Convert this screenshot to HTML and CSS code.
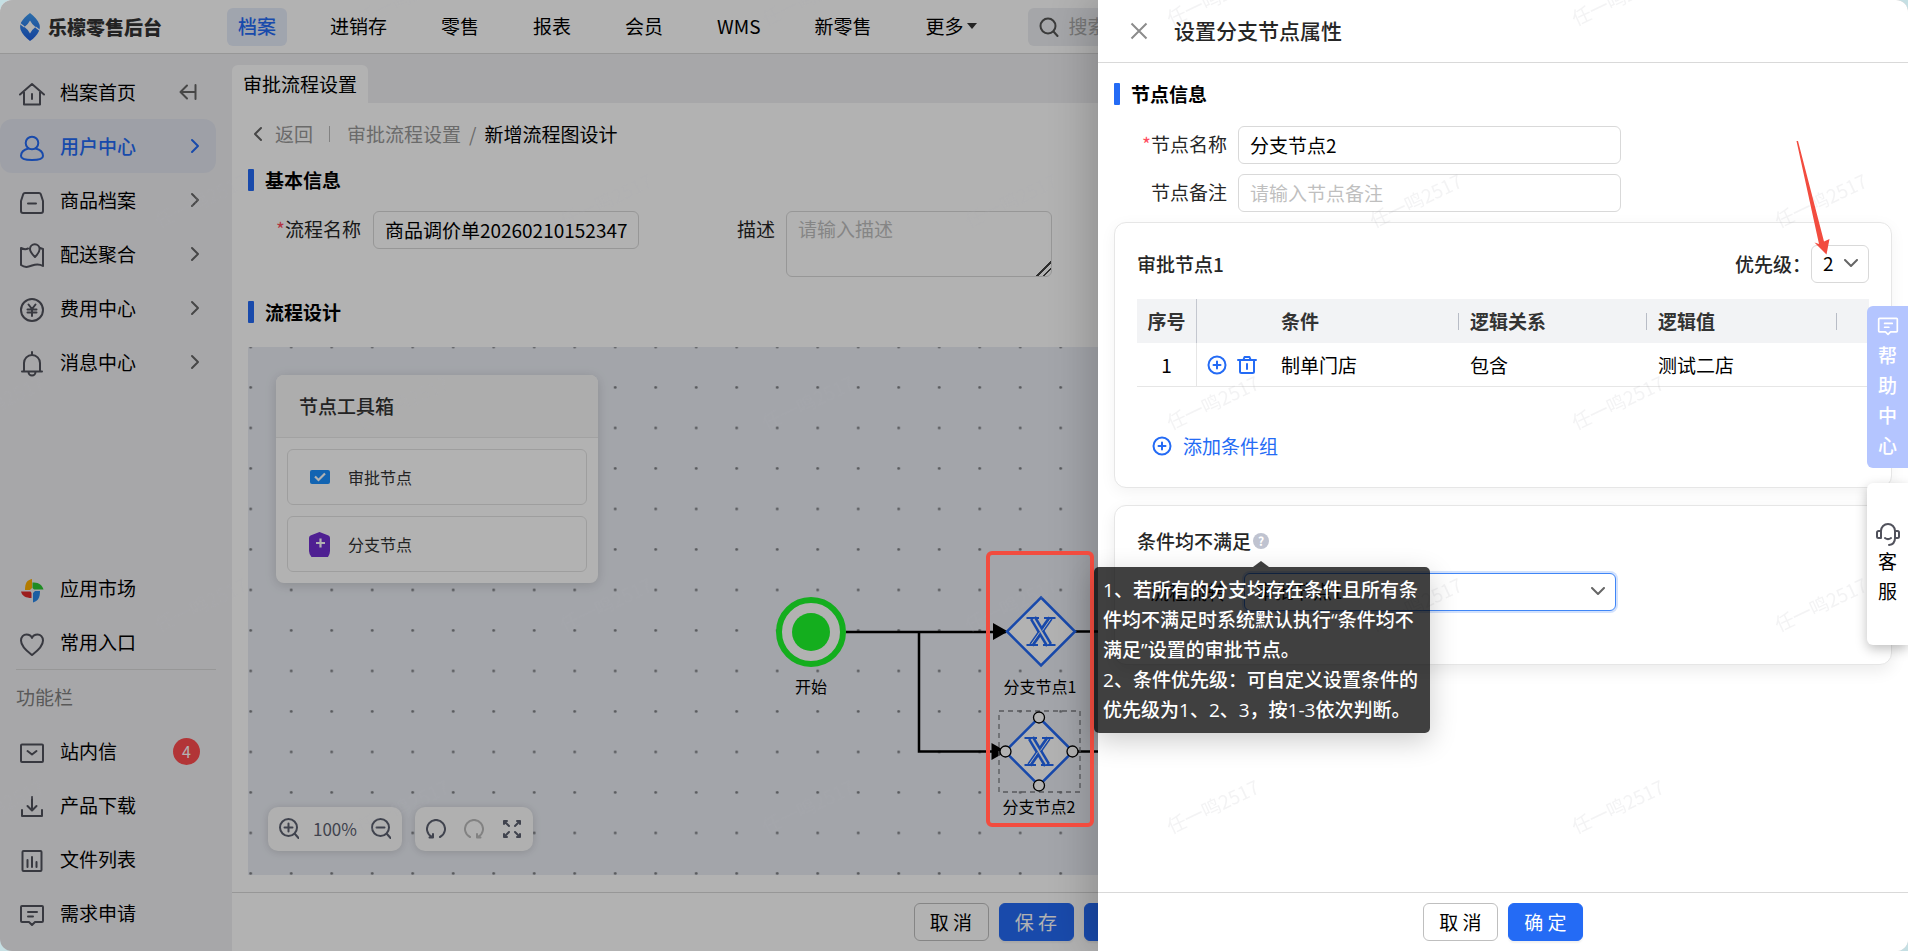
FILE: index.html
```html
<!DOCTYPE html>
<html lang="zh-CN">
<head>
<meta charset="utf-8">
<title>乐檬零售后台</title>
<link rel="stylesheet" href="styles.css">
</head>
<body>
<svg class="sprite" aria-hidden="true">
  <symbol id="i-right" viewBox="0 0 10 16"><path d="M2 2l6 6-6 6"/></symbol>
  <symbol id="i-down" viewBox="0 0 14 9"><path d="M1 1l6 6 6-6"/></symbol>
  <symbol id="i-plus" viewBox="0 0 20 20"><circle cx="10" cy="10" r="8.5"/><path d="M10 6.5v7M6.500 10h7"/></symbol>
  <symbol id="i-note" viewBox="0 0 26 26"><path d="M3 4h20a1 1 0 0 1 1 1v14a1 1 0 0 1-1 1h-7l-3 3-3-3H3a1 1 0 0 1-1-1V5a1 1 0 0 1 1-1zM9 10h9M9 14.500h5"/></symbol>
</svg>

<div class="app">
  <header class="topbar">
    <div class="brand">
      <svg class="brand-mark" width="20" height="28" viewBox="0 0 20 28">
        <defs><linearGradient id="bm" x1="0" y1="0" x2="0" y2="1"><stop offset="0" stop-color="#3f9df2"/><stop offset="1" stop-color="#1d5fe0"/></linearGradient></defs>
        <path fill="url(#bm)" fill-rule="evenodd" d="M10 0C14 3 18 7 19.500 11.500c.500 2 .500 4-.500 6.500-2 4-5 7.500-9 10C6 25 2 21 .500 16.500 0 14 0 12 1 9.500 3 6 6 3 10 0zM10 7.500Q8 11.500 4.500 14 8 16.500 10 20.500 12 16.500 15.500 14 12 11.500 10 7.500z"/>
        <path stroke="#fff" stroke-width="1.200" fill="none" d="M4.500 14L0 10.500M15.500 14l4.500 3.500"/>
      </svg>
      <span class="brand-name">乐檬零售后台</span>
    </div>
    <nav class="topnav">
      <a href="#" class="active">档案</a><a href="#">进销存</a><a href="#">零售</a><a href="#">报表</a><a href="#">会员</a><a href="#">WMS</a><a href="#">新零售</a><a href="#">更多<i class="caret"></i></a>
    </nav>
    <label class="search">
      <svg width="20" height="20" viewBox="0 0 20 20" class="line"><circle cx="9" cy="9" r="7.500"/><path d="M14.500 14.500L18.500 19"/></svg>
      <input type="text" placeholder="搜索" aria-label="搜索">
    </label>
  </header>

  <div class="body">
    <aside class="sidebar">
      <a href="#" class="item">
        <svg class="line" width="26" height="26" viewBox="0 0 26 26"><path d="M1 13.500L13 3l12 10.500M5 11v12.500h16V11M13 13v5"/></svg>
        <span>档案首页</span>
        <svg class="line dim fold" width="18" height="16" viewBox="0 0 18 16"><path d="M16.500 1v14M16 8H2M8 1.500L1.500 8 8 14.500"/></svg>
      </a>
      <a href="#" class="item active">
        <svg class="line" width="26" height="26" viewBox="0 0 26 26"><circle cx="13" cy="8" r="6.300"/><path d="M9.500 13.500C5 14.500 2 17.500 2 21c0 3 5 4 11 4s11-1 11-4c0-3.500-3-6.500-7.500-7.500"/></svg>
        <span>用户中心</span>
        <svg class="line arrow" width="10" height="16"><use href="#i-right"/></svg>
      </a>
      <a href="#" class="item">
        <svg class="line" width="26" height="26" viewBox="0 0 26 26"><path d="M6 4h14a2 2 0 0 1 1.800 1.200L24 12v10a2 2 0 0 1-2 2H4a2 2 0 0 1-2-2V12l2.200-6.800A2 2 0 0 1 6 4zM9 14.500h8"/></svg>
        <span>商品档案</span>
        <svg class="line dim arrow" width="10" height="16"><use href="#i-right"/></svg>
      </a>
      <a href="#" class="item">
        <svg class="line" width="26" height="26" viewBox="0 0 26 26"><path d="M9 5.500c-2 1-4 1-7-.500v17c4 3 7 2 11 .500s7-2 11 .500V6l-3-1"/><path d="M16 14c-3-3-5-5-5-8a4.800 4.800 0 0 1 9.600 0c0 3-1.600 5-4.600 8z"/></svg>
        <span>配送聚合</span>
        <svg class="line dim arrow" width="10" height="16"><use href="#i-right"/></svg>
      </a>
      <a href="#" class="item">
        <svg class="line" width="26" height="26" viewBox="0 0 26 26"><circle cx="13" cy="13" r="11"/><path d="M9.500 7.500l3.500 4.500 3.500-4.500M8.500 12.500h9M8.500 15.500h9M13 12v7"/></svg>
        <span>费用中心</span>
        <svg class="line dim arrow" width="10" height="16"><use href="#i-right"/></svg>
      </a>
      <a href="#" class="item">
        <svg class="line" width="26" height="26" viewBox="0 0 26 26"><path d="M13 1v3M5 20V12a8 8 0 0 1 16 0v8M3 20.500h20M9.500 21a3.500 3.500 0 0 0 7 0"/></svg>
        <span>消息中心</span>
        <svg class="line dim arrow" width="10" height="16"><use href="#i-right"/></svg>
      </a>

      <div class="spacer"></div>

      <a href="#" class="item">
        <svg width="26" height="26" viewBox="0 0 26 26"><path fill="#ffb000" d="M13 2v9l-2 2H6C6 6 8 3 13 2z"/><path fill="#2bc832" d="M13.500 5.500C20 5 23 8 24.500 12.500H15l-1.500-1.500z"/><path fill="#2a87e8" d="M21 14c0 7-2 10-7 11.500V16l2-2z"/><path fill="#e02a2a" d="M2 14.500h9.500l1 1.500v5C7 21 3 19 2 14.500z"/></svg>
        <span>应用市场</span>
      </a>
      <a href="#" class="item">
        <svg class="line" width="26" height="26" viewBox="0 0 26 26"><path d="M13 24C9 21 2 16 2 9.500 2 6 4.500 3.500 7.500 3.500c2.500 0 4.500 1 5.500 3.500 1-2.500 3-3.500 5.500-3.500 3 0 5.500 2.500 5.500 6C24 16 17 21 13 24z"/></svg>
        <span>常用入口</span>
      </a>
      <p class="group-title">功能栏</p>
      <a href="#" class="item">
        <svg class="line" width="26" height="26" viewBox="0 0 26 26"><rect x="2" y="4.500" width="22" height="17.500" rx="1"/><path d="M8.500 11l4.500 3.500 4.500-3.500"/></svg>
        <span>站内信</span><b class="badge">4</b>
      </a>
      <a href="#" class="item">
        <svg class="line" width="26" height="26" viewBox="0 0 26 26"><path d="M13 3v13M8.500 12l4.500 4.500 4.500-4.500M3 16v6h20v-6"/></svg>
        <span>产品下载</span>
      </a>
      <a href="#" class="item">
        <svg class="line" width="26" height="26" viewBox="0 0 26 26"><rect x="3.500" y="3" width="19" height="20" rx="1"/><path d="M8.500 12v7M13 9v10M17.500 14v5"/></svg>
        <span>文件列表</span>
      </a>
      <a href="#" class="item">
        <svg class="line" width="26" height="26"><use href="#i-note"/></svg>
        <span>需求申请</span>
      </a>
    </aside>

    <main class="main">
      <div class="tabs"><a href="#" class="tab">审批流程设置</a></div>
      <section class="page">
        <div class="crumbs">
          <svg class="line" width="10" height="16" viewBox="0 0 10 16"><path d="M8 2L2 8l6 6"/></svg>
          <a href="#">返回</a><i class="vbar"></i><a href="#">审批流程设置</a><span>/</span><strong>新增流程图设计</strong>
        </div>
        <h2 class="section-title">基本信息</h2>
        <div class="form">
          <label for="flow-name"><em>*</em>流程名称</label>
          <input id="flow-name" class="field" type="text" value="商品调价单20260210152347">
          <label for="flow-desc" class="second">描述</label>
          <textarea id="flow-desc" class="field" placeholder="请输入描述"></textarea>
        </div>
        <h2 class="section-title">流程设计</h2>
        <div class="canvas">
          <svg class="diagram">
            <defs>
              <pattern id="dots" width="40.500" height="40.500" patternUnits="userSpaceOnUse" x="-17.500" y="-20.200"><circle cx="20.200" cy="20.200" r="1.400" fill="#7d7f84"/></pattern>
              <g id="gateway">
                <path d="M0-34L34 0 0 34-34 0z" fill="#fff" stroke="#2369f5" stroke-width="2.500"/>
                <g fill="none" stroke="#2369f5">
                  <path stroke-width="2" d="M-14.500-13.500H-2M3-13.500h11.500M-14.500 13.500H-3M2 13.500h12.500"/>
                  <path stroke-width="5" d="M9.500-13.500L-9.500 13.500"/>
                  <path stroke-width="7" d="M-8-13.500L8 13.500"/>
                </g>
                <g fill="none" stroke="#fff">
                  <path stroke-width="1" d="M9.500-12.500L1.500-1M-1.500 1L-9.500 12.500"/>
                  <path stroke-width="1.800" d="M-7.500-12.500L7.500 12.500"/>
                </g>
              </g>
            </defs>
            <rect width="100%" height="100%" fill="url(#dots)"/>
            <g fill="none" stroke="#000" stroke-width="2.500">
              <path d="M598 285h160M671 285v119.500h86M827 284.500h60M825 404.500h60"/>
            </g>
            <path d="M745 276l15 8.500-15 8.500zM743.500 396l15 8.500-15 8.500z"/>
            <circle cx="563" cy="285" r="32" fill="#fff" stroke="#1df92c" stroke-width="6"/>
            <circle cx="563" cy="285" r="19" fill="#1df92c"/>
            <use href="#gateway" x="793" y="284.500"/>
            <use href="#gateway" x="791" y="404.500"/>
            <rect x="751" y="364" width="81" height="81" fill="none" stroke="#7d7f84" stroke-width="1.300" stroke-dasharray="5 4"/>
            <g fill="#fff" stroke="#000" stroke-width="1.300">
              <circle cx="791" cy="370.500" r="5.500"/><circle cx="757.500" cy="404.500" r="5.500"/><circle cx="824.500" cy="404.500" r="5.500"/><circle cx="791" cy="438.500" r="5.500"/>
            </g>
            <g class="node-label">
              <text x="563" y="346">开始</text><text x="792" y="346">分支节点1</text><text x="791" y="466">分支节点2</text>
            </g>
          </svg>

          <div class="toolbox">
            <h3>节点工具箱</h3>
            <div class="tools">
              <button type="button" class="tool">
                <svg width="22" height="26" viewBox="0 0 22 26"><rect x="1" y="6" width="20" height="14" rx="2" fill="#1a90ff"/><path d="M6 12.500l3.500 3.500L16 9.500" fill="none" stroke="#fff" stroke-width="2.200"/></svg>
                审批节点
              </button>
              <button type="button" class="tool">
                <svg width="22" height="26" viewBox="0 0 22 26"><path d="M10.500 1L19.500 4.500Q21 5 21 7v13q0 3-2 6H2.500Q0 23 0 20V7q0-2 1.500-2.500z" fill="#722ed1"/><path d="M11.500 7.500v9M7 12h9" stroke="#fff" stroke-width="2.200"/></svg>
                分支节点
              </button>
            </div>
          </div>

          <div class="controls">
            <div class="control zoom">
              <button type="button" aria-label="放大"><svg class="line" width="20" height="22" viewBox="0 0 20 22"><circle cx="9.500" cy="9.500" r="8.500"/><path d="M9.500 5.500v8M5.500 9.500h8M16 16l3.500 4"/></svg></button>
              <span>100%</span>
              <button type="button" aria-label="缩小"><svg class="line" width="20" height="22" viewBox="0 0 20 22"><circle cx="9.500" cy="9.500" r="8.500"/><path d="M5.500 9.500h8M16 16l3.500 4"/></svg></button>
            </div>
            <div class="control">
              <button type="button" aria-label="撤销"><svg class="line" width="20" height="20" viewBox="0 0 20 20"><path d="M14 18a9 9 0 1 0-8 0M3.500 18.500H7V15"/></svg></button>
              <button type="button" aria-label="重做" class="off"><svg class="line" width="20" height="20" viewBox="0 0 20 20"><path d="M6 18a9 9 0 1 1 8 0M16.500 18.500H13V15"/></svg></button>
              <button type="button" aria-label="全屏"><svg class="line" width="20" height="20" viewBox="0 0 20 20"><path d="M2 2l5 5M18 2l-5 5M2 18l5-5M18 18l-5-5M2 5V2h3M15 2h3v3M2 15v3h3M18 15v3h-3"/></svg></button>
            </div>
          </div>
        </div>
      </section>
      <footer class="actions">
        <button type="button" class="btn">取 消</button>
        <button type="button" class="btn primary">保 存</button>
        <button type="button" class="btn primary wide">保存并发布</button>
      </footer>
    </main>
  </div>

  <div class="mask"></div>

  <section class="drawer" role="dialog" aria-labelledby="drawer-title">
    <header class="drawer-head">
      <button type="button" class="close" aria-label="关闭"><svg width="18" height="18" viewBox="0 0 18 18"><path d="M1.500 1.500l15 15M16.500 1.500l-15 15"/></svg></button>
      <h1 id="drawer-title">设置分支节点属性</h1>
    </header>
    <div class="drawer-body">
      <h2 class="section-title">节点信息</h2>
      <div class="rows">
        <label for="node-name"><em>*</em>节点名称</label>
        <input id="node-name" class="field" type="text" value="分支节点2">
        <label for="node-note">节点备注</label>
        <input id="node-note" class="field" type="text" placeholder="请输入节点备注">
      </div>

      <div class="card conditions">
        <div class="card-head">
          <h3>审批节点1</h3>
          <label for="priority">优先级：</label>
          <div class="select small">
            <select id="priority" class="field"><option>1</option><option selected>2</option><option>3</option></select>
            <svg class="line" width="14" height="9"><use href="#i-down"/></svg>
          </div>
        </div>
        <table>
          <colgroup><col class="c-no"><col class="c-act"><col class="c-cond"><col class="c-rel"><col class="c-val"><col></colgroup>
          <thead><tr><th class="no">序号</th><th></th><th class="sep">条件</th><th class="sep">逻辑关系</th><th class="sep">逻辑值</th><th></th></tr></thead>
          <tbody><tr>
            <td class="no">1</td>
            <td class="act"><div>
              <button type="button" aria-label="添加"><svg class="line" width="20" height="20"><use href="#i-plus"/></svg></button>
              <button type="button" aria-label="删除"><svg class="line" width="20" height="20" viewBox="0 0 20 20"><path d="M1 5h18M6.500 4.500l1-2.500h5l1 2.500M3 5v11.500a1.500 1.500 0 0 0 1.500 1.500h11a1.500 1.500 0 0 0 1.500-1.500V5M10 9v5"/></svg></button>
            </div></td>
            <td>制单门店</td><td>包含</td><td>测试二店</td><td></td>
          </tr></tbody>
        </table>
        <button type="button" class="add"><svg class="line" width="20" height="20"><use href="#i-plus"/></svg>添加条件组</button>
      </div>

      <div class="card fallback">
        <div class="fallback-head">
          <h3>条件均不满足</h3>
          <span class="help">?
            <span class="tooltip" role="tooltip"><span>1、若所有的分支均存在条件且所有条</span><span>件均不满足时系统默认执行“条件均不</span><span>满足”设置的审批节点。</span><span>2、条件优先级：可自定义设置条件的</span><span>优先级为1、2、3，按1-3依次判断。</span></span>
          </span>
        </div>
        <div class="fallback-row">
          <label for="fallback-node"><em>*</em>流程流转</label>
          <div class="select focus">
            <select id="fallback-node" class="field"><option>审批节点1</option></select>
            <svg class="line" width="14" height="9"><use href="#i-down"/></svg>
          </div>
        </div>
      </div>
    </div>
    <footer class="actions">
      <button type="button" class="btn">取 消</button>
      <button type="button" class="btn primary">确 定</button>
    </footer>
  </section>

  <div class="side-tabs">
    <button type="button" class="side-tab help-tab">
      <svg class="line" width="22" height="22"><use href="#i-note"/></svg><span>帮</span><span>助</span><span>中</span><span>心</span>
    </button>
    <button type="button" class="side-tab service-tab">
      <svg class="line" width="24" height="24" viewBox="0 0 24 24"><path d="M5 8v8H2.500A1.500 1.500 0 0 1 1 14.500v-4A1.500 1.500 0 0 1 2.500 9H5a7 7 0 0 1 14 0h2.500a1.500 1.500 0 0 1 1.500 1.500v4a1.500 1.500 0 0 1-1.500 1.500H19V9M19 16c0 4-2 6.500-6 7M9 16c2 1.500 4 1.500 6 0"/></svg><span>客</span><span>服</span>
    </button>
  </div>

  <svg class="overlay" aria-hidden="true">
    <defs>
      <pattern id="wm" width="405" height="404" patternUnits="userSpaceOnUse" x="100" y="100">
        <g class="wm-text"><text transform="translate(101 101) rotate(-25)" dy="7">任一鸣2517</text><text transform="translate(303 303) rotate(-25)" dy="7">任一鸣2517</text></g>
      </pattern>
    </defs>
    <rect width="100%" height="100%" fill="url(#wm)"/>
    <rect x="988" y="553" width="104" height="272" rx="4" fill="none" stroke="#f24c3f" stroke-width="4"/>
    <path d="M1796.500 141h1.500L1824 241.500l5.500-2.500-3 15.500-12-12 4.500 1.500z" fill="#f24c3f"/>
  </svg>
</div>
</body>
</html>
```
FILE: styles.css
```css
* { box-sizing: border-box; }
body {
  margin: 0;
  background: #c5dfe3;
  font-family: "Noto Sans CJK SC", "Noto Sans", sans-serif;
  font-size: 19px;
  line-height: 28px;
  color: #000;
}
h1, h2, h3, p { margin: 0; font-weight: 500; }
a { color: inherit; text-decoration: none; }
em { color: #ff4d5e; font-style: normal; }
button, input, select, textarea { font: inherit; color: inherit; }
button { border: 0; padding: 0; background: none; display: flex; align-items: center; justify-content: center; }
svg { flex: none; display: block; }
.sprite { position: absolute; width: 0; height: 0; }
.line { fill: none; stroke: currentColor; stroke-width: 2; stroke-linejoin: round; stroke-linecap: round; }

.app {
  position: relative;
  display: flex;
  flex-direction: column;
  height: 100vh;
  overflow: hidden;
  border-radius: 12px;
  background: #f0f0f3;
}

/* top bar */
.topbar {
  display: flex;
  align-items: center;
  height: 54px;
  padding: 0 20px;
  background: #fff;
  border-bottom: 1px solid #d9d9d9;
}
.brand { display: flex; align-items: center; gap: 8px; width: 207px; }
.brand-name { font-weight: 900; color: #333; }
.topnav { display: flex; gap: 32px; }
.topnav a { display: flex; align-items: center; height: 38px; padding: 0 11px 2px; border-radius: 6px; }
.topnav .active { background: #e6ecfa; color: #246bf5; font-weight: 500; }
.caret { margin-left: 3px; border: 5px solid transparent; border-top: 6px solid #333; border-bottom: 0; }
.search {
  flex: 1;
  display: flex;
  align-items: center;
  gap: 10px;
  height: 38px;
  margin-left: 40px;
  padding-left: 11px;
  border-radius: 6px;
  background: #eceef2;
  color: #555;
}
.search input { flex: 1; border: 0; padding: 0 0 2px; background: none; }
::placeholder { color: #bfbfbf; opacity: 1; }
.search ::placeholder { color: #aaa; }

/* sidebar */
.body { flex: 1; display: flex; min-height: 0; }
.sidebar { display: flex; flex-direction: column; width: 232px; padding: 11px 16px 11px 0; }
.item { display: flex; align-items: center; height: 54px; padding: 0 16px 0 19px; border-radius: 12px; }
.item span { flex: 1; margin-left: 15px; padding-bottom: 1px; }
.item > svg:first-child { margin-top: 3px; color: #51525c; }
.item .dim { color: #666; }
.item .fold { margin-right: 3px; }
.item.active { background: #e3e6ef; }
.item.active, .item.active > svg:first-child { color: #246bf5; font-weight: 500; }
.spacer { flex: 1; }
.group-title { height: 55px; margin-left: 16px; padding-top: 13px; border-top: 1px solid #d9d9d9; color: #808080; font-weight: 400; }
.badge { width: 27px; height: 27px; border-radius: 50%; background: #ff4d4f; color: #fff; font-size: 16px; font-weight: 400; line-height: 27px; text-align: center; }

/* main page */
.main { flex: 1; display: flex; flex-direction: column; min-width: 0; }
.tabs { padding-top: 11px; }
.tab { display: inline-flex; align-items: center; height: 38px; padding: 0 11px; background: #fff; border-radius: 6px 6px 0 0; vertical-align: top; }
.page { flex: 1; display: flex; flex-direction: column; min-height: 0; padding: 17px 16px 0; background: #fff; }
.crumbs { display: flex; align-items: center; height: 28px; padding-left: 5px; color: #999; }
.crumbs svg { margin-right: 12px; color: #666; }
.crumbs span { margin: 0 8px; }
.crumbs strong { font-weight: 400; color: #000; }
.vbar { width: 1px; height: 16px; margin: 0 17px 0 16px; background: #bbb; }
.section-title { display: flex; align-items: center; gap: 11px; height: 22px; font-size: 19px; font-weight: 700; }
.section-title::before { content: ""; width: 6px; height: 22px; border-radius: 1px; background: #246bf5; }
.page .section-title { margin-top: 21px; }
.field { height: 38px; padding: 0 10px 2px 11px; border: 1px solid #d9d9d9; border-radius: 6px; background: #fff; outline: 0; }
.form { display: flex; align-items: flex-start; height: 89px; padding: 20px 0 0 28px; }
.form label { padding-top: 4px; margin-right: 12px; color: #262626; }
.form .field { width: 266px; }
.form .second { margin-left: 98px; margin-right: 11px; }
.form textarea { height: 66px; padding: 3px 11px; }
textarea::-webkit-resizer {
  background: linear-gradient(135deg, transparent 50%, #444 50%, #444 57%, transparent 57%, transparent 72%, #444 72%, #444 79%, transparent 79%);
}

.canvas { position: relative; flex: 1; margin-top: 24px; margin-bottom: 17px; background: #eaedf4; overflow: hidden; }
.diagram { position: absolute; inset: 0; width: 100%; height: 100%; }
.node-label { font-size: 16px; text-anchor: middle; }
.toolbox {
  position: absolute;
  left: 28px;
  top: 28px;
  width: 322px;
  border-radius: 8px;
  background: #fff;
  box-shadow: 0 2px 12px rgba(0, 0, 0, .15);
  overflow: hidden;
}
.toolbox h3 { height: 63px; padding: 17px 23px; border-bottom: 1px solid #e8e8e8; background: #f8f8f8; color: #333; font-size: 19px; }
.tools { display: flex; flex-direction: column; gap: 11px; padding: 11px; }
.tool { justify-content: flex-start; gap: 17px; height: 56px; padding: 0 21px; border: 1px solid #e3e3e3; border-radius: 6px; font-size: 16px; color: #333; }
.controls { position: absolute; left: 20px; bottom: 24px; display: flex; gap: 13px; }
.control { display: flex; align-items: center; gap: 18px; height: 44px; padding: 0 11px; border-radius: 10px; background: #fcfcfc; box-shadow: 0 1px 8px rgba(0, 0, 0, .15); color: #5c6170; font-size: 17px; }
.control.zoom { gap: 14px; }
.control .off { color: #bbb; }

.actions { display: flex; justify-content: center; gap: 10px; height: 59px; padding-top: 10px; border-top: 1px solid #d9d9d9; background: #fff; }
.btn { width: 75px; height: 38px; border: 1px solid #bfbfbf; border-radius: 6px; background: #fff; }
.btn.primary { border-color: #246bf5; background: #246bf5; color: #fff; box-shadow: 0 2px 2px rgba(0, 0, 0, .06); }
.btn.wide { width: 143px; }

/* drawer */
.mask { position: absolute; inset: 0; background: rgba(0, 0, 0, .3); }
.drawer {
  position: absolute;
  top: 0;
  right: 0;
  bottom: 0;
  display: flex;
  flex-direction: column;
  width: 810px;
  background: #fff;
  box-shadow: -8px 0 40px rgba(0, 0, 0, .2);
}
.drawer-head { display: flex; align-items: center; gap: 26px; height: 63px; padding-left: 32px; border-bottom: 1px solid #d9d9d9; }
.drawer-head h1 { padding-bottom: 2px; font-size: 21px; color: #262626; }
.close path { stroke: #8c8c8c; stroke-width: 2; }
.drawer-body { flex: 1; padding: 20px 16px 0; }
.rows { display: grid; grid-template-columns: 113px 383px; column-gap: 11px; row-gap: 10px; margin: 21px 0 10px; align-items: center; }
.rows label { padding-bottom: 2px; text-align: right; color: #262626; }
.card { border: 1px solid #e6e6e6; border-radius: 12px; background: #fff; box-shadow: 0 4px 16px rgba(0, 0, 0, .05); }
.card h3 { font-size: 19px; color: #262626; }
.conditions { height: 266px; padding: 22px; }
.card-head { display: flex; align-items: center; height: 38px; }
.card-head h3 { flex: 1; }
.card-head label { font-weight: 500; color: #262626; }
.select { position: relative; }
.select .field { display: block; width: 100%; appearance: none; }
.select svg { position: absolute; right: 11px; top: 14px; color: #666; pointer-events: none; }
.select.small { width: 58px; }
table { width: 100%; margin-top: 16px; border-collapse: separate; border-spacing: 0; table-layout: fixed; }
.c-no { width: 60px; }
.c-act { width: 73px; }
.c-cond { width: 189px; }
.c-rel { width: 188px; }
.c-val { width: 190px; }
th { height: 44px; padding: 0 11px; background: #f2f3f5; color: #333; font-weight: 700; text-align: left; }
th.sep { background: linear-gradient(#b8bcc6, #b8bcc6) right center / 1px 17px no-repeat #f2f3f5; }
td { height: 44px; padding: 0 11px; border-bottom: 1px solid #e6e6e6; }
.no { padding: 0; text-align: center; border-right: 1px solid #e6e6e6; }
th.no { border-right-color: #c4c7cf; }
.act { padding: 0 10px; }
.act div { display: flex; gap: 10px; color: #246bf5; }
.add { gap: 11px; margin: 45px 0 0 15px; color: #246bf5; }
.fallback { height: 160px; margin-top: 17px; padding: 21px 22px; box-shadow: 0 6px 16px rgba(0, 0, 0, .08); }
.fallback-head { display: flex; align-items: center; }
.help { position: relative; width: 16px; height: 16px; margin-left: 2px; border-radius: 50%; background: #bfc3d0; color: #fff; font-size: 12px; line-height: 16px; text-align: center; font-weight: 700; }
.fallback-row { display: flex; align-items: center; gap: 18px; margin-top: 18px; padding-left: 4px; }
.fallback-row .select { width: 372px; }
.select.focus .field { border-color: #4086f7; box-shadow: 0 0 0 2px #d3e2fd; }
.tooltip {
  position: absolute;
  left: -159px;
  top: 34px;
  z-index: 2;
  display: flex;
  flex-direction: column;
  width: 336px;
  padding: 8px 9px;
  border-radius: 5px;
  background: rgba(0, 0, 0, .75);
  box-shadow: 0 8px 28px rgba(0, 0, 0, .2);
  color: #fff;
  font-family: "Open Sans", "Noto Sans CJK SC", sans-serif;
  font-size: 19px;
  font-weight: 500;
  line-height: 30px;
  text-align: left;
  white-space: nowrap;
}
.tooltip::before { content: ""; position: absolute; left: 159px; top: -6px; border: 8px solid transparent; border-top: 0; border-bottom: 6px solid rgba(0, 0, 0, .75); }

/* floating tabs at the right edge */
.side-tabs { position: absolute; right: 0; top: 306px; display: flex; flex-direction: column; gap: 15px; }
.side-tab { flex-direction: column; width: 41px; height: 162px; border-radius: 6px 0 0 6px; line-height: 30px; }
.help-tab { background: #b4c5ff; color: #fff; font-weight: 500; }
.help-tab svg { margin-bottom: 3px; }
.service-tab { background: #fff; box-shadow: 0 4px 12px rgba(0, 0, 0, .25); }
.service-tab svg { color: #51525c; }

.overlay { position: absolute; inset: 0; width: 100%; height: 100%; pointer-events: none; }
.wm-text { font-size: 19px; text-anchor: middle; fill: #a8acb0; fill-opacity: .14; }
```
